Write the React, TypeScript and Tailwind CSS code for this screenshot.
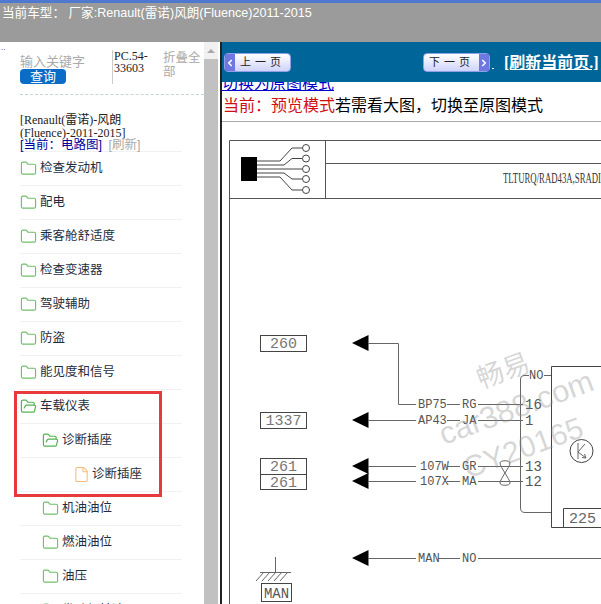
import { ChevronLeft, ChevronRight, File, Folder, FolderOpen } from "lucide-react";

const cjk = '"Liberation Sans", "Noto Sans CJK SC", sans-serif';
const serif = '"Liberation Serif", "Noto Sans CJK SC", serif';

const rows = [
  { label: "检查发动机", level: 0, icon: "closed" },
  { label: "配电", level: 0, icon: "closed" },
  { label: "乘客舱舒适度", level: 0, icon: "closed" },
  { label: "检查变速器", level: 0, icon: "closed" },
  { label: "驾驶辅助", level: 0, icon: "closed" },
  { label: "防盗", level: 0, icon: "closed" },
  { label: "能见度和信号", level: 0, icon: "closed" },
  { label: "车载仪表", level: 0, icon: "open" },
  { label: "诊断插座", level: 1, icon: "open" },
  { label: "诊断插座", level: 2, icon: "file" },
  { label: "机油油位", level: 1, icon: "closed" },
  { label: "燃油油位", level: 1, icon: "closed" },
  { label: "油压", level: 1, icon: "closed" },
  { label: "发动机转速", level: 1, icon: "closed" },
];

const TreeRow = ({ label, level, icon }: { label: string; level: number; icon: string }) => (
  <div
    className={`flex h-[34px] shrink-0 items-center border-b border-[#f1f1f1] text-[12.5px] text-[#1f2d40] ${
      level === 0 ? "" : level === 1 ? "pl-[22px]" : "pl-[53px]"
    }`}
  >
    {icon === "closed" && <Folder size={17} strokeWidth={1.6} className="mr-[3px] text-[#6fbf68]" />}
    {icon === "open" && <FolderOpen size={17} strokeWidth={1.7} className="mr-[3px] text-[#55b350]" />}
    {icon === "file" && <File size={17} strokeWidth={1.5} className="mr-[2px] text-[#f5bd78]" />}
    <span>{label}</span>
  </div>
);

const PageButton = ({ label, next }: { label: string; next?: boolean }) => (
  <div className="mt-[1px] flex h-[19px] w-[67px] items-center justify-between rounded-sm border border-[#8fa0e8] bg-gradient-to-b from-[#ffffff] to-[#cfd3fa] text-[11px] text-[#222]">
    {!next && (
      <span className="flex h-full w-[10px] items-center justify-center bg-[#6f78e0]">
        <ChevronLeft size={10} strokeWidth={4} className="text-white" />
      </span>
    )}
    <span className="flex-1 text-center tracking-[4px]">{label}</span>
    {next && (
      <span className="flex h-full w-[10px] items-center justify-center bg-[#6f78e0]">
        <ChevronRight size={10} strokeWidth={4} className="text-white" />
      </span>
    )}
  </div>
);

const Diagram = () => {
  const mono = { fontFamily: '"Liberation Mono", monospace', fontSize: 12, fill: "#555" };
  const line = { stroke: "#666", strokeWidth: 1, fill: "none" };
  const arrows = [343, 420, 466, 481, 558];
  const boxes = [
    { y: 335, h: 16, t: "260" },
    { y: 412, h: 16, t: "1337" },
    { y: 458, h: 16, t: "261" },
    { y: 474, h: 15, t: "261" },
  ];
  return (
    <svg width="379" height="480" viewBox="222 124 379 480" className="block shrink-0">
      <path d="M229.5 140.5H601M229.5 140.5V604M325.5 140.5V198.5M325.5 163.5H601M229.5 198.5H601" stroke="#555" strokeWidth="1" fill="none" />
      <rect x="241" y="157" width="16" height="24" fill="#000" />
      {[148, 158.5, 169, 179, 190].map((y) => (
        <circle key={y} cx="306" cy={y} r="3.5" fill="#fff" stroke="#444" />
      ))}
      <path d="M257 161H280L292 148H302M257 165H284L292 158.5H302M257 169H302M257 173H284L292 179H302M257 177H280L292 190H302" {...line} stroke="#444" />
      <text x="503" y="183" textLength="98" lengthAdjust="spacingAndGlyphs" fontFamily='"Liberation Serif", serif' fontSize="14" fill="#333">
        TLTURQ/RAD43A,SRADI
      </text>

      {boxes.map((b, i) => (
        <g key={i}>
          <rect x="260.5" y={b.y + 0.5} width="46" height={b.h} fill="#fff" stroke="#444" />
          <text x="283.5" y={b.y + 13} textAnchor="middle" {...mono} fontSize={15} fill="#777">
            {b.t}
          </text>
        </g>
      ))}
      {arrows.map((y) => (
        <polygon key={y} points={`352,${y} 368.5,${y - 8} 368.5,${y + 8}`} fill="#000" />
      ))}

      <path d="M368 343.5H398.5V404.5H416M368 420.5H416M368 466.5H416M368 481.5H416M368 558.5H416" {...line} />
      <path d="M447 404.5H460M478 404.5H523M447 420.5H460M478 420.5H523M447 466.5H460M478 466.5H523M447 481.5H460M478 481.5H523M438 558.5H460M478 558.5H601" {...line} />
      <path d="M500 463C500 460 510 460 510 463C510 467 500 479 500 483C500 486 510 486 510 483C510 479 500 467 500 463Z" {...line} />
      <path d="M529 375.5H524Q520.5 375.5 520.5 379V508Q520.5 512.5 525 512.5H551M544 375.5H551" {...line} />
      <path d="M601 366.5H551.5V527.5H601M563.5 527V508.5H601" stroke="#444" strokeWidth="1" fill="none" />

      {[
        ["BP75", 418, 408],
        ["RG", 462, 408],
        ["AP43", 418, 424],
        ["JA", 462, 424],
        ["107W", 420, 470],
        ["GR", 462, 470],
        ["107X", 420, 485],
        ["MA", 462, 485],
        ["MAN", 418, 562],
        ["NO", 462, 562],
        ["NO", 529, 379],
      ].map(([t, x, y], i) => (
        <text key={i} x={x} y={y} {...mono}>
          {t}
        </text>
      ))}
      {[
        ["16", 525, 409],
        ["1", 525, 425],
        ["13", 525, 471],
        ["12", 525, 486],
      ].map(([t, x, y]) => (
        <text key={String(t)} x={x} y={y} {...mono} fontSize={14}>
          {t}
        </text>
      ))}
      <text x="569" y="523" {...mono} fontSize={15} fill="#666">
        225
      </text>
      <circle cx="581.5" cy="451" r="11.5" fill="none" stroke="#444" />
      <path d="M578 443V459M578 452L585 444M578 452L586 458M586 458L582 457.5M586 458L584.5 454" {...line} />

      <path d="M275.5 557V572M260 572.5H291M264 572L256 581M270 572L262 581M276 572L268 581M282 572L274 581M288 572L280 581" {...line} />
      <rect x="261.5" y="583.5" width="30" height="18" fill="#fff" stroke="#444" />
      <text x="276.5" y="598" textAnchor="middle" {...mono} fontSize={14}>
        MAN
      </text>

      <g fill="#8a8a8a" fillOpacity="0.34" fontFamily={cjk}>
        <text x="503" y="380" textAnchor="middle" fontSize="27" transform="rotate(-20 503 370)">
          畅易
        </text>
        <text x="516" y="418" textAnchor="middle" fontSize="31" transform="rotate(-20 516 407)">
          car388.com
        </text>
        <text x="523" y="458" textAnchor="middle" fontSize="30" transform="rotate(-20 523 447)">
          CY20165
        </text>
      </g>
    </svg>
  );
};

export default function App() {
  return (
    <div className="flex h-[604px] w-[601px] flex-col overflow-hidden bg-white" style={{ fontFamily: cjk }}>
      <div className="h-[42px] shrink-0 border-t-[3px] border-[#4f78cf] bg-[#9b9b9b] pl-[2px] pt-[1px] text-[12.6px] leading-[18px] text-white">
        当前车型： 厂家:Renault(雷诺)风朗(Fluence)2011-2015
      </div>

      <div className="flex min-h-0 flex-1">
        <div className="relative h-full w-[204px] shrink-0 overflow-hidden">
          <div className="absolute left-[1px] top-[2px] text-[8px] leading-[8px] text-[#333]">..</div>
          <div className="flex h-[52px] items-start pl-[20px] pt-[8px]">
            <div className="w-[92px] pt-[5px]">
              <div className="text-[13px] leading-[14px] text-[#aaa]">输入关键字</div>
              <div className="h-[15px] w-[46px] rounded-[4px] bg-[#0a6cc6] text-center text-[13px] leading-[15px] text-white">查询</div>
            </div>
            <div className="h-[34px] w-[51px] border-l border-[#ccc] pl-[1px] text-[12px] leading-[12px] text-[#222]" style={{ fontFamily: serif }}>
              PC.54-
              <br />
              33603
            </div>
            <div className="w-[38px] pt-[1px] text-[12.5px] leading-[14px] text-[#aaa]">折叠全部</div>
          </div>
          <div className="ml-[20px] border-t border-dashed border-[#c8d4dc]" />
          <div className="ml-[20px] mt-[19px] w-[120px] text-[12px] leading-[12.5px] text-[#222]" style={{ fontFamily: serif }}>
            [Renault(雷诺)-风朗(Fluence)-2011-2015]
          </div>
          <div className="ml-[20px] text-[12.5px] leading-[13px] text-[#0000a0]">
            [当前：电路图] <span className="ml-[3px] text-[#aaa]">[刷新]</span>
          </div>
          <div className="-mt-[1px] ml-[20px] mr-[22px] flex flex-col border-t border-[#f1f1f1]">
            {rows.map((r, i) => (
              <TreeRow key={i} {...r} />
            ))}
          </div>
          <div className="absolute left-[14px] top-[349px] h-[106px] w-[148px] border-[3px] border-[#e8393f]" />
        </div>

        <div className="flex w-[16px] shrink-0 pr-[2px]">
          <div className="flex w-[14px] flex-col bg-[#f1f1f1]">
            <div className="flex h-[17px] items-center justify-center">
              <div className="h-0 w-0 border-x-[4px] border-b-[4px] border-x-transparent border-b-[#a9a9a9]" />
            </div>
            <div className="flex-1 bg-[#c1c1c1]" />
          </div>
        </div>

        <div className="flex min-w-0 flex-1 flex-col overflow-hidden border-l-2 border-[#222]">
          <div className="flex h-[40px] shrink-0 items-center bg-[#006699] pl-[2px]">
            <PageButton label="上一页" />
            <div className="ml-[132px]">
              <PageButton label="下一页" next />
            </div>
            <span className="ml-[2px] mt-[12px] h-[1px] w-[2px] bg-white" />
            <span className="ml-[10px] mt-[1px] whitespace-nowrap text-[16px] font-bold text-white underline" style={{ fontFamily: serif }}>
              [刷新当前页.]
            </span>
          </div>
          <div className="flex h-[12px] shrink-0 items-end overflow-hidden">
            <a className="text-[16px] leading-[20px] text-[#0000d0] underline">切换为原图模式</a>
          </div>
          <div className="h-[28px] shrink-0 border-b border-[#aaa] pl-[1px] text-[16px] leading-[23px] text-black">
            <span className="text-[#d01010]">当前：预览模式</span>若需看大图，切换至原图模式
          </div>
          <div className="pt-[2px]">
            <Diagram />
          </div>
        </div>
      </div>
    </div>
  );
}
